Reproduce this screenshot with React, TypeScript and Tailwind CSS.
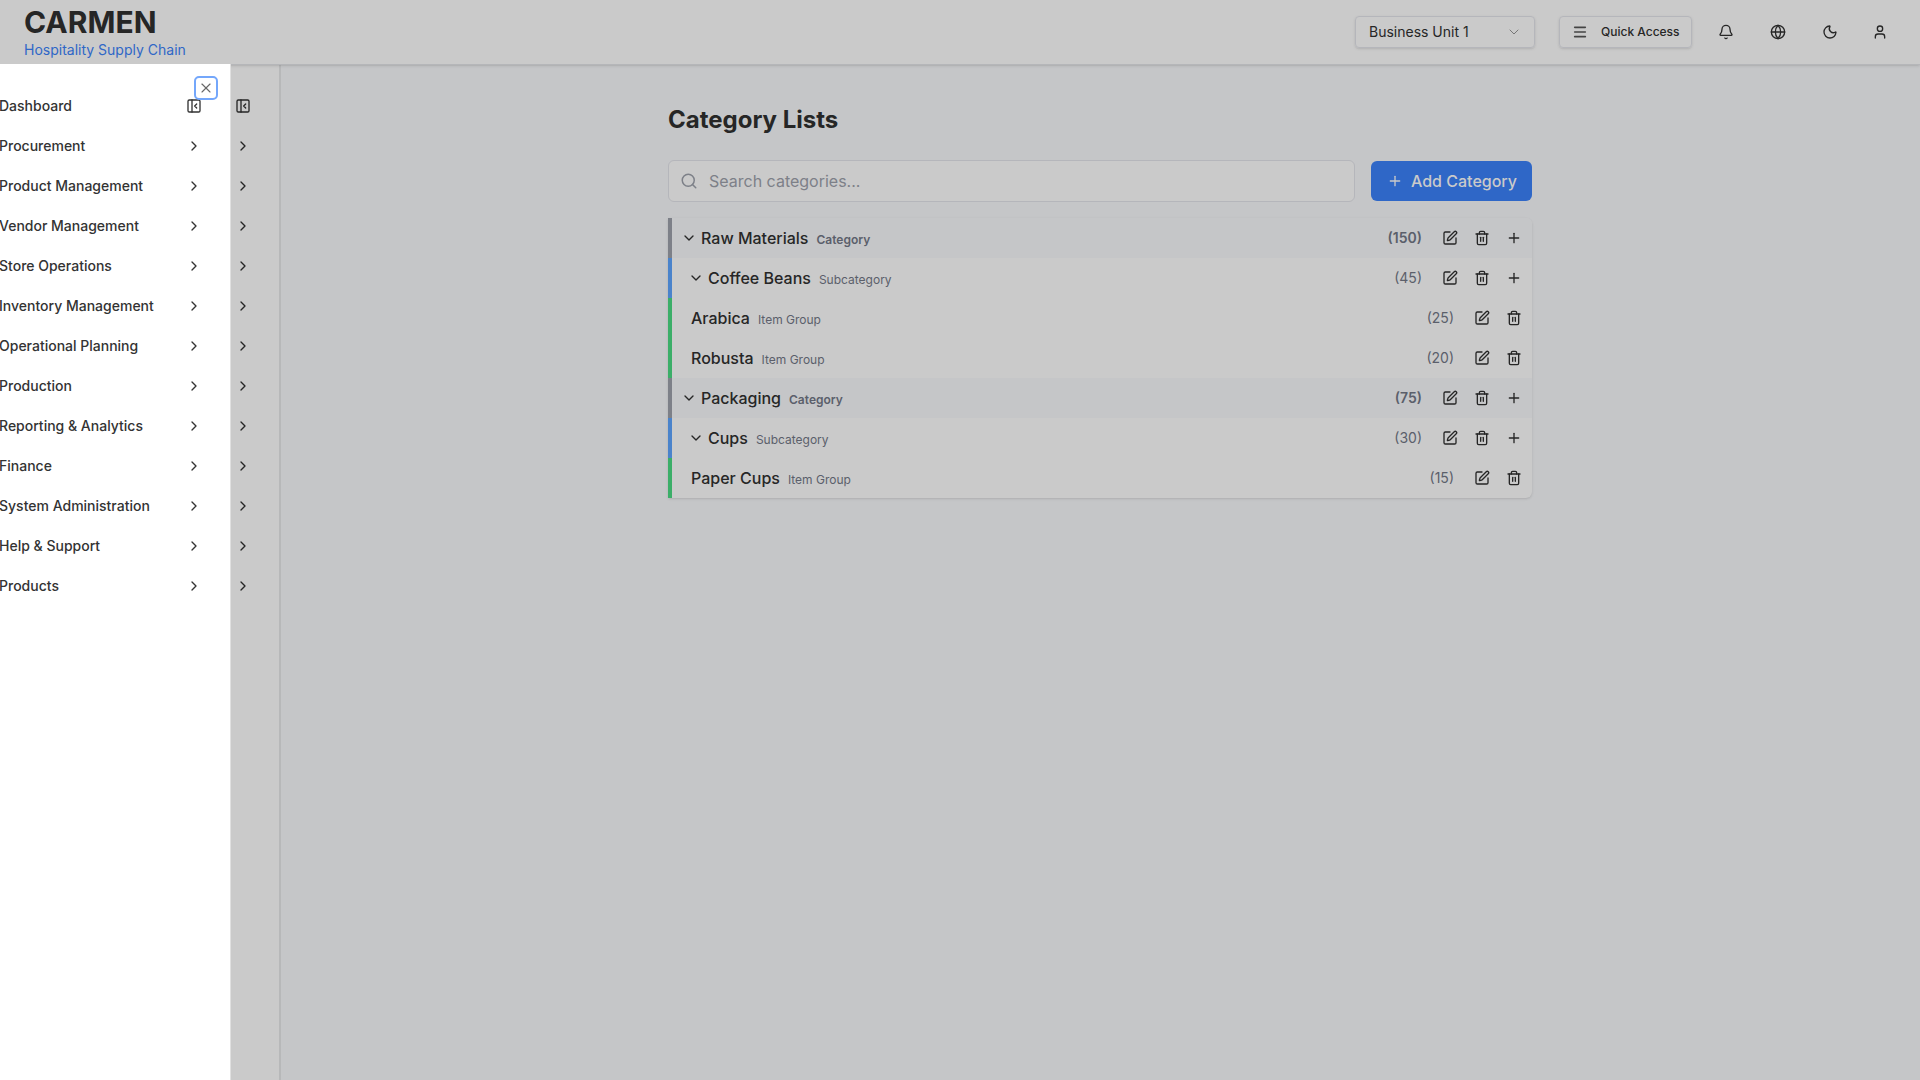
import React from "react";
import { Bell, ChevronDown, ChevronRight, Globe, Menu, Moon, PanelLeftClose, Plus, Search, SquarePen, Trash2, User, X } from "lucide-react";

const navItems = [
  "Dashboard",
  "Procurement",
  "Product Management",
  "Vendor Management",
  "Store Operations",
  "Inventory Management",
  "Operational Planning",
  "Production",
  "Reporting & Analytics",
  "Finance",
  "System Administration",
  "Help & Support",
  "Products",
];

type Level = "Category" | "Subcategory" | "Item Group";

const rows: { name: string; level: Level; count: number }[] = [
  { name: "Raw Materials", level: "Category", count: 150 },
  { name: "Coffee Beans", level: "Subcategory", count: 45 },
  { name: "Arabica", level: "Item Group", count: 25 },
  { name: "Robusta", level: "Item Group", count: 20 },
  { name: "Packaging", level: "Category", count: 75 },
  { name: "Cups", level: "Subcategory", count: 30 },
  { name: "Paper Cups", level: "Item Group", count: 15 },
];

const rowStyle: Record<Level, string> = {
  Category: "border-[#7d8088] bg-[#c5c6c8] pl-[9px]",
  Subcategory: "border-[#4a83cb] pl-4",
  "Item Group": "border-[#3bae68] pl-[19px]",
};

function NavIcon({ index }: { index: number }) {
  return index === 0 ? <PanelLeftClose size={16} /> : <ChevronRight size={16} />;
}

function Header() {
  return (
    <header className="z-10 flex h-[65px] shrink-0 items-center justify-between border-b border-[#b5b6b9] bg-[#cacaca] pb-px pl-6 pr-8 shadow-sm">
      <div className="flex flex-col">
        <span className="text-[30px] font-bold leading-9">CARMEN</span>
        <span className="text-sm leading-5 text-[#2f67c7]">Hospitality Supply Chain</span>
      </div>
      <div className="flex items-center">
        <button className="mr-6 flex h-8 w-[180px] items-center justify-between rounded border border-[#b5b6bb] pl-[13px] pr-3 text-sm shadow-sm">
          Business Unit 1
          <ChevronDown size={16} strokeWidth={1.5} className="text-[#777777]" />
        </button>
        <button className="mr-[26px] flex h-8 w-[133px] items-center rounded border border-[#b5b6bb] pl-3 text-xs font-medium shadow-sm">
          <Menu size={16} strokeWidth={2.4} className="mr-[13px] text-[#444444]" />
          Quick Access
        </button>
        <Bell size={16} strokeWidth={2} className="mr-9" />
        <Globe size={16} strokeWidth={2} className="mr-9" />
        <Moon size={16} strokeWidth={2} className="mr-[34px]" />
        <User size={16} strokeWidth={2} />
      </div>
    </header>
  );
}

function CategoryRow({ name, level, count }: { name: string; level: Level; count: number }) {
  const top = level === "Category";
  const leaf = level === "Item Group";
  return (
    <div className={`flex h-10 items-center justify-between border-l-4 pr-[10px] ${rowStyle[level]}`}>
      <div className="flex items-center">
        {!leaf && <ChevronDown size={16} className="mr-1" />}
        <span className="text-base font-medium">{name}</span>
        <span className={`ml-2 mt-[3px] text-xs text-[#5b5f6b] ${top ? "font-semibold" : ""}`}>{level}</span>
      </div>
      <div className="flex items-center gap-4">
        <span className={`mr-1 text-sm text-[#5b5f6b] ${top ? "font-semibold" : ""}`}>({count})</span>
        <SquarePen size={16} />
        <Trash2 size={16} />
        {!leaf && <Plus size={16} />}
      </div>
    </div>
  );
}

export default function App() {
  return (
    <div className="relative flex h-screen w-full flex-col overflow-hidden bg-[#c5c6c8] font-['Inter',sans-serif] text-[#262626]">
      <Header />
      <div className="flex min-h-0 flex-1">
        <aside className="w-[281px] shrink-0 border-r-2 border-[#b7b8b9] bg-[#cacaca] pl-[235px] pt-[21px]">
          {navItems.map((item, i) => (
            <div key={item} className="flex h-10 items-center">
              <NavIcon index={i} />
            </div>
          ))}
        </aside>
        <main className="flex flex-1 justify-center pr-[1px] pt-[39px]">
          <div className="w-[864px]">
            <h1 className="text-2xl font-bold leading-8">Category Lists</h1>
            <div className="mt-6 flex items-center gap-4">
              <div className="flex h-[42px] flex-1 items-center rounded-md border border-[#b5b6bb] bg-[#cacaca] pl-[11px] text-[#7d8088]">
                <Search size={18} className="mr-[11px]" />
                <span className="text-base">Search categories...</span>
              </div>
              <button className="flex h-10 w-[161px] items-center rounded-md bg-[#2f67c7] pl-4 text-base font-medium text-[#cacaca]">
                <Plus size={16} strokeWidth={2} className="mr-2" />
                Add Category
              </button>
            </div>
            <div className="mt-4 overflow-hidden rounded-r-md bg-[#cacaca] shadow-sm">
              {rows.map((row) => (
                <CategoryRow key={row.name} {...row} />
              ))}
            </div>
          </div>
        </main>
      </div>
      <nav className="absolute bottom-0 left-0 top-16 z-20 w-[231px] border-r border-[#e0e0e0] bg-white pt-[22px] text-[#333333]">
        {navItems.map((item, i) => (
          <div key={item} className="-ml-px flex h-10 items-center justify-between pr-7 text-sm font-medium">
            {item}
            <NavIcon index={i} />
          </div>
        ))}
        <button className="absolute right-3 top-3 flex size-6 items-center justify-center rounded-[5px] border-2 border-[#74a7fb] text-[#666666]">
          <X size={16} strokeWidth={1.7} />
        </button>
      </nav>
    </div>
  );
}
